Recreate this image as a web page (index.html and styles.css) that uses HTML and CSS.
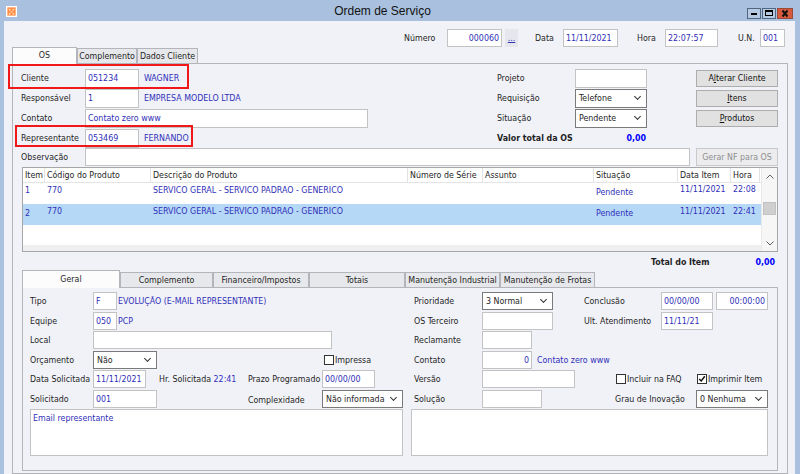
FILE: index.html
```html
<!DOCTYPE html>
<html lang="pt-BR">
<head>
<meta charset="utf-8">
<title>Ordem de Serviço</title>
<link rel="stylesheet" href="styles.css">
</head>
<body>
<div class="window">
  <div class="titlebar">
    <div class="tb-side tb-left">
      <svg class="appicon" viewBox="0 0 12 12"><rect width="12" height="12" fill="#fff"/><rect x="1.5" y="1.5" width="9" height="9" fill="#ff8a3d"/><rect x="3" y="3" width="2" height="2" fill="#ffd2ae"/><rect x="7" y="3" width="2" height="2" fill="#ffd2ae"/><rect x="5" y="5.5" width="2" height="1.5" fill="#ffd2ae"/><rect x="3" y="7.5" width="2" height="2" fill="#ffd2ae"/><rect x="7" y="7.5" width="2" height="2" fill="#ffd2ae"/></svg>
    </div>
    <div class="tb-title">Ordem de Serviço</div>
    <div class="tb-side tb-right">
      <span class="wbtn wmin"></span>
      <span class="wbtn wmax"></span>
      <span class="wbtn wclose"><svg viewBox="0 0 14 9" class="xglyph"><path d="M4.5 1.5 L9.5 7.5 M9.5 1.5 L4.5 7.5" stroke="#111" stroke-width="2" fill="none"/></svg></span>
    </div>
  </div>

  <div class="client">
    <div class="hdr">
      <span class="lb w43">Número</span>
      <span class="fld w55 r">000060</span>
      <span class="dots">...</span>
      <span class="lb w28 ml17">Data</span>
      <span class="fld w55">11/11/2021</span>
      <span class="lb w28 ml19">Hora</span>
      <span class="fld w53">22:07:57</span>
      <span class="lb w22 ml20">U.N.</span>
      <span class="fld w25">001</span>
    </div>

    <div class="tabs">
      <span class="tab on w65">OS</span>
      <span class="tab w60">Complemento</span>
      <span class="tab w61">Dados Cliente</span>
    </div>

    <div class="panel os">
      <div class="hl hl-cli"></div>
      <div class="hl hl-rep"></div>

      <div class="row">
        <div class="left">
          <span class="lb w64">Cliente</span>
          <span class="fld h19 w54">051234</span>
          <span class="val caps ml5">WAGNER</span>
        </div>
        <span class="lb w78">Projeto</span>
        <span class="fld h19 w72"></span>
        <span class="sp w49"></span>
        <span class="btn w82">A<u>l</u>terar Cliente</span>
      </div>
      <div class="row">
        <div class="left">
          <span class="lb w64">Responsável</span>
          <span class="fld h19 w54">1</span>
          <span class="val caps ml5">EMPRESA MODELO LTDA</span>
        </div>
        <span class="lb w78">Requisição</span>
        <span class="fld sel h19 w72">Telefone</span>
        <span class="sp w49"></span>
        <span class="btn w82"><u>I</u>tens</span>
      </div>
      <div class="row">
        <div class="left">
          <span class="lb w64">Contato</span>
          <span class="fld h19 w283">Contato zero www</span>
        </div>
        <span class="lb w78">Situação</span>
        <span class="fld sel h19 w72">Pendente</span>
        <span class="sp w49"></span>
        <span class="btn w82"><u>P</u>rodutos</span>
      </div>
      <div class="row">
        <div class="left">
          <span class="lb w64">Representante</span>
          <span class="fld h19 w54">053469</span>
          <span class="val caps ml5">FERNANDO</span>
        </div>
        <span class="lb w78 bold">Valor total da OS</span>
        <span class="money w72">0,00</span>
      </div>
      <div class="row obs">
        <span class="lb w64">Observação</span>
        <span class="fld w605"></span>
        <span class="btn dis w82 ml6">Gerar NF para OS</span>
      </div>

      <div class="grid">
        <div class="gmain">
          <div class="grow ghead">
            <span>Item</span><span>Código do Produto</span><span>Descrição do Produto</span><span>Número de Série</span><span>Assunto</span><span>Situação</span><span>Data Item</span><span>Hora</span>
          </div>
          <div class="grow gdata">
            <span>1</span><span>770</span><span class="caps">SERVICO GERAL - SERVICO PADRAO - GENERICO</span><span></span><span></span><span class="lo">Pendente</span><span class="hi">11/11/2021</span><span class="hi">22:08</span>
          </div>
          <div class="grow gdata selrow">
            <span class="lo">2</span><span>770</span><span class="caps">SERVICO GERAL - SERVICO PADRAO - GENERICO</span><span></span><span></span><span class="lo">Pendente</span><span>11/11/2021</span><span>22:41</span>
          </div>
          <div class="gfill"></div>
          <div class="gstrip"></div>
        </div>
        <div class="vscroll">
          <span class="sbarrow"><svg viewBox="0 0 8 5" class="chev"><path d="M0.5 4.5 L4 1 L7.5 4.5" stroke="#606060" stroke-width="1" fill="none"/></svg></span>
          <span class="thumb"></span>
          <span class="sbfill"></span>
          <span class="sbarrow"><svg viewBox="0 0 8 5" class="chev"><path d="M0.5 0.5 L4 4 L7.5 0.5" stroke="#606060" stroke-width="1" fill="none"/></svg></span>
        </div>
      </div>

      <div class="total">
        <span class="w63">Total do Item</span>
        <span class="w61 r blue">0,00</span>
      </div>

      <div class="btabs">
        <span class="btab on w98">Geral</span>
        <span class="btab w93">Complemento</span>
        <span class="btab w96">Financeiro/Impostos</span>
        <span class="btab w96">Totais</span>
        <span class="btab w95">Manutenção Industrial</span>
        <span class="btab w95">Manutenção de Frotas</span>
      </div>

      <div class="panel bpanel">
        <div class="brow">
          <span class="lb w63">Tipo</span>
          <span class="fld w24">F</span>
          <span class="val caps w297 pl1">EVOLUÇÃO (E-MAIL REPRESENTANTE)</span>
          <span class="lb w68">Prioridade</span>
          <span class="fld sel w71">3 Normal</span>
          <span class="lb w108 pl31">Conclusão</span>
          <span class="fld w52">00/00/00</span>
          <span class="fld w52 ml3 r">00:00:00</span>
        </div>
        <div class="brow">
          <span class="lb w63">Equipe</span>
          <span class="fld w24">050</span>
          <span class="val caps w297 pl1">PCP</span>
          <span class="lb w68">OS Terceiro</span>
          <span class="fld w71"></span>
          <span class="lb w108 pl31">Ult. Atendimento</span>
          <span class="fld w52">11/11/21</span>
        </div>
        <div class="brow">
          <span class="lb w63">Local</span>
          <span class="fld w239"></span>
          <span class="sp w82"></span>
          <span class="lb w68">Reclamante</span>
          <span class="fld w50"></span>
        </div>
        <div class="brow">
          <span class="lb w63">Orçamento</span>
          <span class="fld sel w64">Não</span>
          <span class="sp w167"></span>
          <span class="chk w90"><span class="box"></span>Impressa</span>
          <span class="lb w68">Contato</span>
          <span class="fld w50 r">0</span>
          <span class="val ml5">Contato zero www</span>
        </div>
        <div class="brow">
          <span class="lb w63">Data Solicitada</span>
          <span class="fld w53">11/11/2021</span>
          <span class="lb w102 pl13">Hr. Solicitada <span class="blue2">22:41</span></span>
          <span class="lb w74">Prazo Programado</span>
          <span class="fld w53">00/00/00</span>
          <span class="sp w39"></span>
          <span class="lb w68">Versão</span>
          <span class="fld w93"></span>
          <span class="sp w41"></span>
          <span class="chk w81"><span class="box"></span>Incluir na FAQ</span>
          <span class="chk"><span class="box"><svg viewBox="0 0 10 10" class="tick"><path d="M1.5 5 L4 7.5 L8.5 1.5" stroke="#111" stroke-width="1.8" fill="none"/></svg></span>Imprimir Item</span>
        </div>
        <div class="brow">
          <span class="lb w63">Solicitado</span>
          <span class="fld w64">001</span>
          <span class="sp w91"></span>
          <span class="lb w74 lower">Complexidade</span>
          <span class="fld sel w81">Não informada</span>
          <span class="sp w11"></span>
          <span class="lb w68">Solução</span>
          <span class="fld w60"></span>
          <span class="lb w154 pl73">Grau de Inovação</span>
          <span class="fld sel w72">0 Nenhuma</span>
        </div>
        <div class="memos">
          <div class="memo w373">Email representante</div>
          <div class="memo w357"></div>
        </div>
      </div>
    </div>
  </div>
</div>
</body>
</html>
```

FILE: styles.css
```css
* { box-sizing: border-box; }
html, body { margin: 0; padding: 0; }
body {
  width: 800px; height: 474px; overflow: hidden;
  background: #a9c1de;
  font-family: "DejaVu Sans Condensed", "Liberation Sans", Arial, sans-serif;
  font-size: 8.8px;
  color: #1e1e1e;
}
.window { width: 800px; height: 474px; display: flex; flex-direction: column; }

/* title bar */
.titlebar { height: 21px; flex: none; display: flex; }
.tb-side { width: 70px; flex: none; display: flex; }
.tb-left { padding: 6px 0 0 6px; }
.appicon { width: 11px; height: 11px; display: block; }
.tb-title { flex: 1; text-align: center; padding-right: 35px; font-family: "Liberation Sans", Arial, sans-serif; font-size: 12px; line-height: 22px; color: #111; }
.tb-right { justify-content: flex-end; align-items: flex-start; padding: 8px 7px 0 0; gap: 1px; }
.wbtn { width: 14px; height: 11px; border: 1px solid #51667f; background: #b6c9e2; position: relative; display: block; }
.wmin::after { content: ""; position: absolute; left: 3px; top: 4px; width: 6px; height: 2px; background: #000; }
.wmax::after { content: ""; position: absolute; left: 2px; top: 1px; width: 8px; height: 6px; border: 1px solid #000; border-top-width: 2px; box-sizing: border-box; }
.wclose { width: 16px; background: #d65b3e; border-color: #9a4a36; }
.xglyph { display: block; width: 14px; height: 9px; }

/* client area */
.client { flex: 1; min-height: 0; margin: 0 5px 0 4px; background: #f1f2f8; display: flex; flex-direction: column; }

.hdr { display: flex; align-items: center; height: 18px; margin-top: 8px; padding-left: 400px; flex: none; }

.lb { flex: none; white-space: nowrap; }
.bold { font-weight: bold; }
.sp { flex: none; height: 1px; }
.fld {
  flex: none; height: 18px; border: 1px solid #c3c3c3; background: #fff;
  color: #3030b8; padding: 0 2px; line-height: 16px; white-space: nowrap; overflow: hidden;
}
.fld.h19 { height: 19px; line-height: 17px; }
.sel { border-color: #7a7a7a; color: #1e1e1e; position: relative; padding-left: 3px; }
.sel::after {
  content: ""; position: absolute; right: 6px; top: 50%; margin-top: -4px;
  width: 4px; height: 4px; border-right: 1.2px solid #333; border-bottom: 1.2px solid #333;
  transform: rotate(45deg);
}
.r { text-align: right; }
.val { flex: none; white-space: nowrap; color: #3030b8; }
.caps { letter-spacing: 0; }
.blue { color: #0000ff; }
.blue2 { color: #3030b8; }
.dots { flex: none; width: 13px; height: 18px; margin-left: 3px; background: #e6e7ed; color: #3030b8; text-decoration: underline; text-align: center; line-height: 18px; }
.lower { padding-top: 2px; }

/* widths & spacing */
.w11{width:11px}.w22{width:22px}.w24{width:24px}.w25{width:25px}.w28{width:28px}
.w39{width:39px}.w41{width:41px}.w43{width:43px}.w49{width:49px}.w50{width:50px}
.w52{width:52px}.w53{width:53px}.w54{width:54px}.w55{width:55px}.w60{width:60px}
.w61{width:61px}.w63{width:63px}.w64{width:64px}.w65{width:65px}.w68{width:68px}
.w71{width:71px}.w72{width:72px}.w74{width:74px}.w78{width:78px}.w81{width:81px}
.w82{width:82px}.w90{width:90px}.w91{width:91px}.w93{width:93px}.w95{width:95px}
.w96{width:96px}.w98{width:98px}.w102{width:102px}.w108{width:108px}.w154{width:154px}
.w167{width:167px}.w239{width:239px}.w283{width:283px}.w297{width:297px}
.w357{width:357px}.w373{width:373px}.w605{width:605px}
.ml3{margin-left:3px}.ml5{margin-left:5px}.ml6{margin-left:6px}.ml17{margin-left:17px}
.ml19{margin-left:19px}.ml20{margin-left:20px}
.pl1{padding-left:1px}.pl13{padding-left:13px}.pl31{padding-left:31px}.pl73{padding-left:73px}

/* tabs */
.tabs { display: flex; align-items: flex-end; height: 16px; margin-left: 8px; flex: none; position: relative; z-index: 1; }
.tab, .btab {
  flex: none; height: 15px; border: 1px solid #b3b5bb; border-bottom: none;
  background: #e7e8eb; text-align: center; line-height: 15px; white-space: nowrap; overflow: hidden;
}
.tab.on { height: 17px; margin-bottom: -1px; background: #fcfcfd; line-height: 15px; }

.panel { border: 1px solid #b3b5bb; background: #f1f2f8; }
.os { flex: 1; width: 776px; margin-left: 8px; position: relative; display: flex; flex-direction: column; padding-top: 4px; min-height: 0; }

.hl { position: absolute; border: 2px solid #f01818; pointer-events: none; z-index: 3; }
.hl-cli { left: -5px; top: 0; width: 181px; height: 25px; }
.hl-rep { left: 2px; top: 61px; width: 178px; height: 22px; }

.row { display: flex; align-items: center; height: 20px; padding-left: 8px; flex: none; }
.left { width: 476px; flex: none; display: flex; align-items: center; }
.row.obs { height: 18px; }
.btn {
  flex: none; height: 17px; border: 1px solid #adadad; background: #e1e1e1;
  text-align: center; line-height: 15px; color: #111; white-space: nowrap;
}
.row.obs .btn { height: 18px; line-height: 16px; }
.btn.dis { color: #8e8e8e; background: #ececee; border-color: #c9c9c9; }
.money { flex: none; text-align: right; font-weight: bold; color: #0000ff; padding-right: 1px; }

/* grid */
.grid { flex: none; margin: 1px 0 0 9px; width: 756px; height: 85px; border: 1px solid #a6a6a6; background: #fff; display: flex; }
.gmain { flex: 1; min-width: 0; display: flex; flex-direction: column; }
.grow { display: grid; grid-template-columns: 22px 106px 257px 75px 111px 84px 53px 29px; flex: none; }
.grow > span { padding-left: 2px; white-space: nowrap; overflow: hidden; }
.ghead { height: 15px; line-height: 14px; border-bottom: 1px solid #e4e4e4; }
.ghead > span { border-right: 1px solid #e2e2e2; }
.gdata { height: 21px; line-height: 14px; color: #3030b8; }
.gdata .lo { padding-top: 1.5px; }
.gdata .hi { margin-top: -1.5px; }
.selrow { background: #b5d8f7; }
.gfill { flex: 1; }
.gstrip { flex: none; height: 6px; background: #efeff1; }
.vscroll { width: 16px; flex: none; background: #f6f6f6; border-left: 1px solid #e8e8e8; display: flex; flex-direction: column; align-items: center; }
.sbarrow { height: 16px; flex: none; display: flex; align-items: center; justify-content: center; width: 100%; }
.chev { width: 8px; height: 5px; display: block; }
.thumb { flex: none; margin-top: 18px; width: 13px; height: 13px; background: #cfcfcf; border: 1px solid #c2c2c2; }
.sbfill { flex: 1; }

.total { display: flex; justify-content: flex-end; align-items: center; height: 17px; margin-top: 1px; padding-right: 12px; font-weight: bold; flex: none; }

/* bottom tabs */
.btabs { display: flex; align-items: flex-end; height: 17px; margin-left: 9px; flex: none; position: relative; z-index: 1; }
.btab.on { height: 18px; margin-bottom: -1px; background: #fcfcfd; line-height: 16px; }

.bpanel { flex: none; margin-left: 9px; width: 756px; height: 184px; padding: 3.5px 0 0 7px; }
.brow { display: flex; align-items: center; height: 19.5px; }
.chk { flex: none; display: flex; align-items: center; white-space: nowrap; }
.box { flex: none; width: 10px; height: 10px; border: 1px solid #333; background: #fff; margin-right: 1px; display: flex; align-items: center; justify-content: center; }
.tick { width: 8px; height: 8px; display: block; }
.memos { display: flex; gap: 8px; margin-top: 0.5px; height: 47px; }
.memo { flex: none; height: 47px; background: #fff; border: 1px solid #c3c3c3; color: #3030b8; padding: 3px 2px; line-height: 11px; }
```
